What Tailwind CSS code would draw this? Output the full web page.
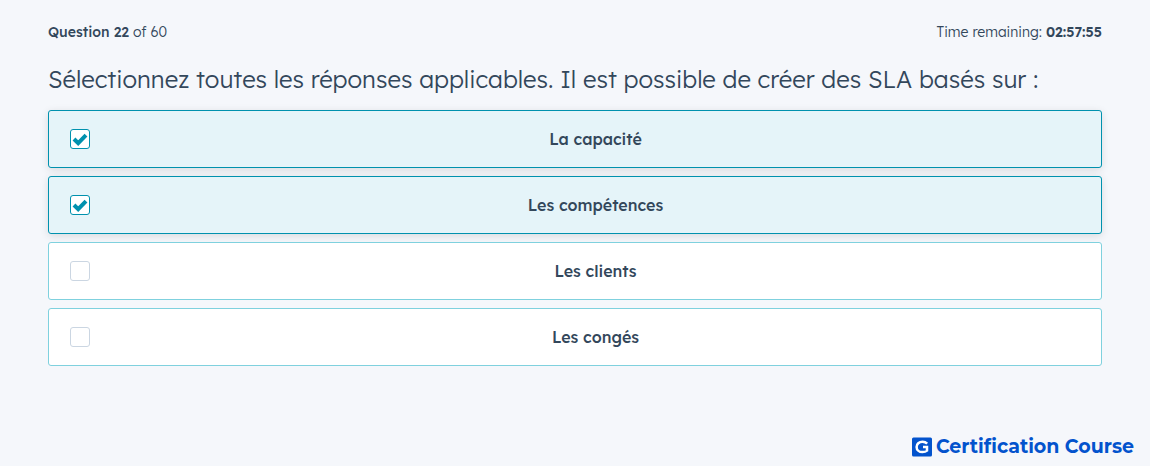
<!DOCTYPE html>
<html lang="fr">
<head>
    <meta charset="UTF-8">
    <meta name="viewport" content="width=device-width, initial-scale=1.0">
    <title>Certification Course</title>
    <script src="https://cdn.jsdelivr.net/npm/@tailwindcss/browser@4"></script>
</head>
<body class="flex min-h-screen flex-col bg-[#f5f7fb] font-['Lexend_Deca','Inter',sans-serif] text-[#33475b]">
    <main class="flex-1 px-12 pt-5">
        <!-- Progress and timer -->
        <header class="mb-4 flex items-center justify-between text-sm leading-6 font-light">
            <p><strong class="font-medium">Question 22</strong> of 60</p>
            <p>Time remaining: <strong class="font-semibold">02:57:55</strong></p>
        </header>

        <form>
            <fieldset>
                <legend class="mb-3 text-2xl leading-[38px] font-light">Sélectionnez toutes les réponses applicables. Il est possible de créer des SLA basés sur :</legend>

                <!-- Answers -->
                <div class="flex flex-col gap-2">
                    <label class="flex h-[58px] cursor-pointer items-center rounded-[3px] border border-[#7fd1de] bg-white pl-[21px] has-checked:border-[#0091ae] has-checked:bg-[#e5f4f9] has-checked:shadow-[0_2px_8px_rgba(0,0,0,0.12)]">
                        <span class="grid size-5 place-items-center">
                            <input type="checkbox" name="answer" value="capacite" checked class="peer col-start-1 row-start-1 size-5 appearance-none rounded-[3px] border border-[#cbd6e2] bg-white checked:border-[#0091ae]">
                            <svg class="pointer-events-none invisible col-start-1 row-start-1 size-4 peer-checked:visible" viewBox="0 0 16 16" fill="none" stroke="#0091ae" stroke-width="4" aria-hidden="true"><path d="M2 8 6.2 12.2 14 4.2"/></svg>
                        </span>
                        <span class="flex-1 text-center text-base font-medium">La capacité</span>
                    </label>
                    <label class="flex h-[58px] cursor-pointer items-center rounded-[3px] border border-[#7fd1de] bg-white pl-[21px] has-checked:border-[#0091ae] has-checked:bg-[#e5f4f9] has-checked:shadow-[0_2px_8px_rgba(0,0,0,0.12)]">
                        <span class="grid size-5 place-items-center">
                            <input type="checkbox" name="answer" value="competences" checked class="peer col-start-1 row-start-1 size-5 appearance-none rounded-[3px] border border-[#cbd6e2] bg-white checked:border-[#0091ae]">
                            <svg class="pointer-events-none invisible col-start-1 row-start-1 size-4 peer-checked:visible" viewBox="0 0 16 16" fill="none" stroke="#0091ae" stroke-width="4" aria-hidden="true"><path d="M2 8 6.2 12.2 14 4.2"/></svg>
                        </span>
                        <span class="flex-1 text-center text-base font-medium">Les compétences</span>
                    </label>
                    <label class="flex h-[58px] cursor-pointer items-center rounded-[3px] border border-[#7fd1de] bg-white pl-[21px] has-checked:border-[#0091ae] has-checked:bg-[#e5f4f9] has-checked:shadow-[0_2px_8px_rgba(0,0,0,0.12)]">
                        <span class="grid size-5 place-items-center">
                            <input type="checkbox" name="answer" value="clients" class="peer col-start-1 row-start-1 size-5 appearance-none rounded-[3px] border border-[#cbd6e2] bg-white checked:border-[#0091ae]">
                            <svg class="pointer-events-none invisible col-start-1 row-start-1 size-4 peer-checked:visible" viewBox="0 0 16 16" fill="none" stroke="#0091ae" stroke-width="4" aria-hidden="true"><path d="M2 8 6.2 12.2 14 4.2"/></svg>
                        </span>
                        <span class="flex-1 text-center text-base font-medium">Les clients</span>
                    </label>
                    <label class="flex h-[58px] cursor-pointer items-center rounded-[3px] border border-[#7fd1de] bg-white pl-[21px] has-checked:border-[#0091ae] has-checked:bg-[#e5f4f9] has-checked:shadow-[0_2px_8px_rgba(0,0,0,0.12)]">
                        <span class="grid size-5 place-items-center">
                            <input type="checkbox" name="answer" value="conges" class="peer col-start-1 row-start-1 size-5 appearance-none rounded-[3px] border border-[#cbd6e2] bg-white checked:border-[#0091ae]">
                            <svg class="pointer-events-none invisible col-start-1 row-start-1 size-4 peer-checked:visible" viewBox="0 0 16 16" fill="none" stroke="#0091ae" stroke-width="4" aria-hidden="true"><path d="M2 8 6.2 12.2 14 4.2"/></svg>
                        </span>
                        <span class="flex-1 text-center text-base font-medium">Les congés</span>
                    </label>
                </div>
            </fieldset>
        </form>
    </main>

    <!-- Brand -->
    <footer class="flex items-center justify-end gap-1 px-4 pb-1 font-['Montserrat','Inter',sans-serif] text-[#0353cd]">
        <svg class="size-5" viewBox="0 0 20 20" aria-hidden="true">
            <rect width="20" height="19" y=".5" rx="1.5" fill="#0353cd"/>
            <path d="M15.2 6.6C13.8 5.2 12.2 4.7 10.5 4.7 7 4.7 4.6 7 4.6 9.9S7 15.1 10.5 15.1C12.4 15.1 14 14.5 15 13.6V10H11" fill="none" stroke="#fff" stroke-width="2.5"/>
        </svg>
        <span class="text-[19px] leading-[30px] font-bold">Certification Course</span>
    </footer>
</body>
</html>
